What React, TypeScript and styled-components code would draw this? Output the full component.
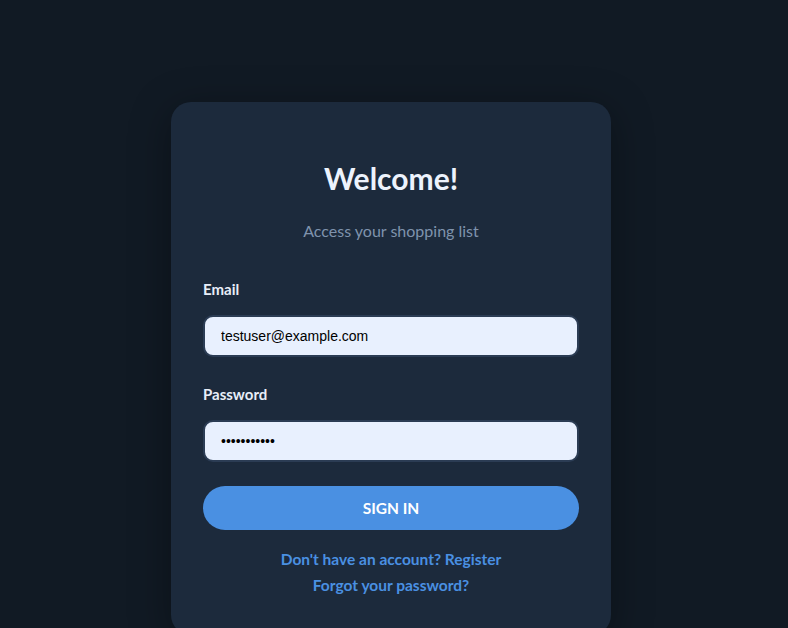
import * as React from 'react';
import styled, { createGlobalStyle } from 'styled-components';

const GlobalStyle = createGlobalStyle`
    html, body {
        margin: 0;
        padding: 0;
        background: #111a24;
        font-family: Lato, "Noto Sans", sans-serif;
    }
    * {
        box-sizing: border-box;
    }
`;

const Page = styled.div`
    min-height: 628px;
    display: flex;
    justify-content: center;
    padding: 102px 6px 0 0;
    overflow: hidden;
`;

const Card = styled.div`
    width: 440px;
    background: #1c2a3c;
    border-radius: 20px;
    padding: 59px 32px 40px;
    box-shadow: 0 8px 40px rgba(0, 0, 0, 0.35);
    display: flex;
    flex-direction: column;
`;

const Title = styled.h1`
    margin: 0;
    text-align: center;
    color: #edf3fd;
    font-size: 30px;
    font-weight: 700;
    line-height: 34px;
`;

const Subtitle = styled.p`
    margin: 26px 0 38px;
    text-align: center;
    color: #7f93ad;
    font-size: 16px;
    line-height: 20px;
`;

const Field = styled.div<{ $gap: number }>`
    display: flex;
    flex-direction: column;
    margin-bottom: ${(p) => p.$gap}px;
`;

const Label = styled.label`
    color: #e8eef8;
    font-size: 15px;
    font-weight: 700;
    line-height: 20px;
    margin-bottom: 16px;
`;

const Input = styled.input`
    height: 42px;
    width: 100%;
    border: 2px solid #2b3c54;
    border-radius: 10px;
    background: #e8f0fe;
    padding: 0 16px;
    font-family: "Liberation Sans", Arial, sans-serif;
    font-size: 14px;
    color: #000;
    outline: none;
`;

const Button = styled.button`
    height: 44px;
    width: 100%;
    border: none;
    border-radius: 22px;
    background: #4a90e2;
    color: #fff;
    font-family: Lato, "Noto Sans", sans-serif;
    font-size: 15.5px;
    font-weight: 700;
    cursor: pointer;
`;

const Links = styled.div`
    display: flex;
    flex-direction: column;
    align-items: center;
    gap: 6px;
    margin-top: 19px;
`;

const LinkText = styled.a`
    color: #4a90e2;
    font-size: 15.5px;
    font-weight: 700;
    line-height: 20px;
    text-decoration: none;
`;

export default function App() {
    return (
        <>
            <GlobalStyle />
            <Page>
                <Card>
                    <Title>Welcome!</Title>
                    <Subtitle>Access your shopping list</Subtitle>
                    <Field $gap={27}>
                        <Label>Email</Label>
                        <Input type="email" defaultValue="testuser@example.com" />
                    </Field>
                    <Field $gap={24}>
                        <Label>Password</Label>
                        <Input type="password" defaultValue="password123" />
                    </Field>
                    <Button>SIGN IN</Button>
                    <Links>
                        <LinkText href="#">Don't have an account? Register</LinkText>
                        <LinkText href="#">Forgot your password?</LinkText>
                    </Links>
                </Card>
            </Page>
        </>
    );
}
